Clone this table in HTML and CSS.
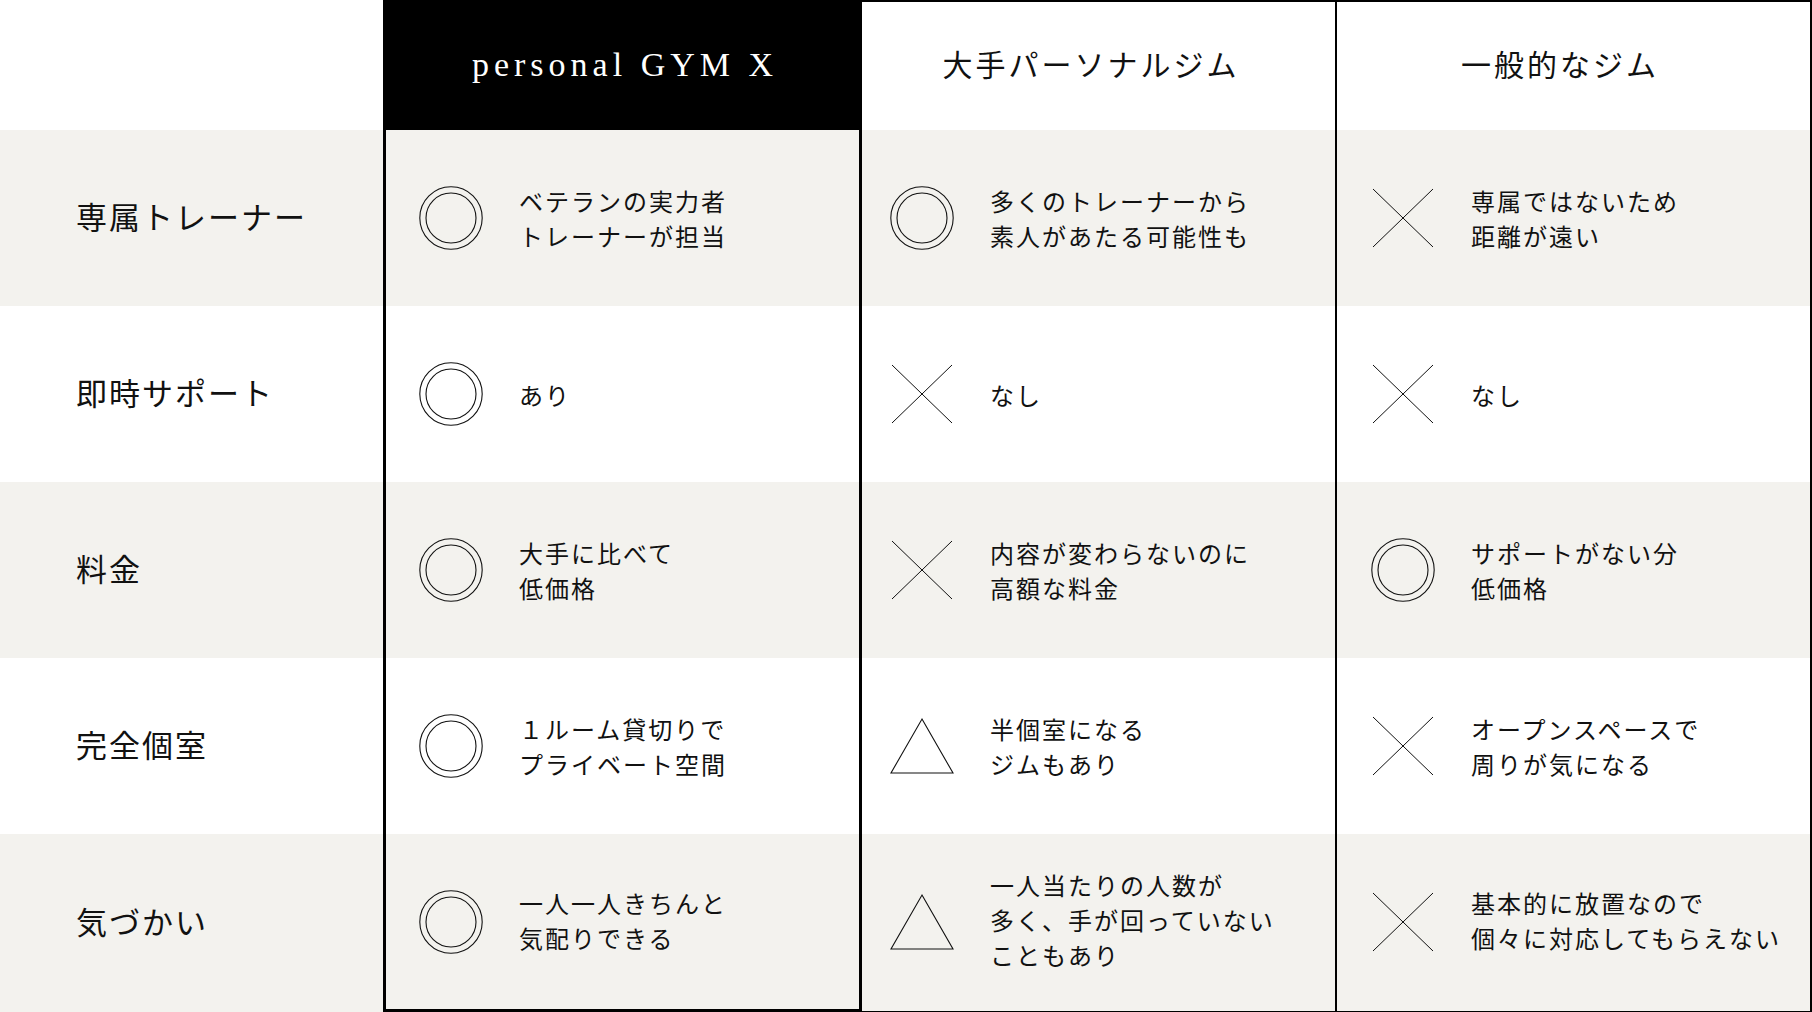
FILE: index.html
```html
<!DOCTYPE html>
<html lang="ja">
<head>
<meta charset="utf-8">
<title>比較表</title>
<link rel="stylesheet" href="styles.css">
</head>
<body>
<svg width="0" height="0" class="defs" aria-hidden="true">
  <defs>
    <symbol id="maru" viewBox="0 0 64 64">
      <circle cx="32" cy="32" r="31.2" fill="none" stroke="#111" stroke-width="1.1"/>
      <circle cx="32" cy="32" r="25" fill="none" stroke="#111" stroke-width="1.1"/>
    </symbol>
    <symbol id="batsu" viewBox="0 0 64 64">
      <line x1="2" y1="3" x2="62" y2="61" stroke="#111" stroke-width="1"/>
      <line x1="62" y1="3" x2="2" y2="61" stroke="#111" stroke-width="1"/>
    </symbol>
    <symbol id="sankaku" viewBox="0 0 64 64">
      <polygon points="32,5 63,59 1,59" fill="none" stroke="#111" stroke-width="1.1" stroke-linejoin="miter"/>
    </symbol>
  </defs>
</svg>
<div class="table">
  <div class="row head">
    <div class="label"></div>
    <div class="cell c1"><span class="brand">personal GYM X</span></div>
    <div class="cell c2"><span class="htxt">大手パーソナルジム</span></div>
    <div class="cell c3"><span class="htxt">一般的なジム</span></div>
  </div>

  <div class="row alt">
    <div class="label">専属トレーナー</div>
    <div class="cell c1"><svg class="ic"><use href="#maru"/></svg><p class="txt">ベテランの実力者<br>トレーナーが担当</p></div>
    <div class="cell c2"><svg class="ic"><use href="#maru"/></svg><p class="txt">多くのトレーナーから<br>素人があたる可能性も</p></div>
    <div class="cell c3"><svg class="ic"><use href="#batsu"/></svg><p class="txt">専属ではないため<br>距離が遠い</p></div>
  </div>

  <div class="row">
    <div class="label">即時サポート</div>
    <div class="cell c1"><svg class="ic"><use href="#maru"/></svg><p class="txt">あり</p></div>
    <div class="cell c2"><svg class="ic"><use href="#batsu"/></svg><p class="txt">なし</p></div>
    <div class="cell c3"><svg class="ic"><use href="#batsu"/></svg><p class="txt">なし</p></div>
  </div>

  <div class="row alt">
    <div class="label">料金</div>
    <div class="cell c1"><svg class="ic"><use href="#maru"/></svg><p class="txt">大手に比べて<br>低価格</p></div>
    <div class="cell c2"><svg class="ic"><use href="#batsu"/></svg><p class="txt">内容が変わらないのに<br>高額な料金</p></div>
    <div class="cell c3"><svg class="ic"><use href="#maru"/></svg><p class="txt">サポートがない分<br>低価格</p></div>
  </div>

  <div class="row">
    <div class="label">完全個室</div>
    <div class="cell c1"><svg class="ic"><use href="#maru"/></svg><p class="txt">１ルーム貸切りで<br>プライベート空間</p></div>
    <div class="cell c2"><svg class="ic"><use href="#sankaku"/></svg><p class="txt">半個室になる<br>ジムもあり</p></div>
    <div class="cell c3"><svg class="ic"><use href="#batsu"/></svg><p class="txt">オープンスペースで<br>周りが気になる</p></div>
  </div>

  <div class="row alt last">
    <div class="label">気づかい</div>
    <div class="cell c1"><svg class="ic"><use href="#maru"/></svg><p class="txt">一人一人きちんと<br>気配りできる</p></div>
    <div class="cell c2"><svg class="ic"><use href="#sankaku"/></svg><p class="txt">一人当たりの人数が<br>多く、手が回っていない<br>こともあり</p></div>
    <div class="cell c3"><svg class="ic"><use href="#batsu"/></svg><p class="txt">基本的に放置なので<br>個々に対応してもらえない</p></div>
  </div>
</div>
</body>
</html>
```
FILE: styles.css
```css
html, body {
  margin: 0;
  padding: 0;
  background: #fff;
}
body {
  width: 1812px;
  height: 1012px;
  overflow: hidden;
  color: #111;
  font-family: "Noto Sans CJK JP", "Noto Sans", sans-serif;
}
.defs {
  position: absolute;
  width: 0;
  height: 0;
}
.table {
  display: flex;
  flex-direction: column;
  width: 1812px;
}
.row {
  display: grid;
  grid-template-columns: 383px 479px 475px 475px;
  height: 176px;
}
.row.head {
  height: 130px;
}
.row.last {
  height: 178px;
}
.row.alt {
  background: #f3f2ee;
}
.label {
  display: flex;
  align-items: center;
  padding-left: 76px;
  padding-bottom: 5px;
  font-size: 31px;
  letter-spacing: 2px;
  line-height: 1;
}
.cell {
  box-sizing: border-box;
  display: flex;
  align-items: center;
}
.c1 {
  border-left: 3px solid #000;
  border-right: 3px solid #000;
  padding-left: 33px;
}
.c2 {
  border-right: 2px solid #000;
  padding-left: 28px;
}
.c3 {
  border-right: 2px solid #000;
  padding-left: 34px;
}
.last .c1 {
  border-bottom: 3px solid #000;
}
.last .c2,
.last .c3 {
  border-bottom: 1px solid #000;
  padding-bottom: 2px;
}
.head .cell {
  justify-content: center;
  padding-left: 0;
}
.head .c1 {
  background: #000;
  padding-left: 5px;
}
.head .c2 {
  border-top: 2px solid #000;
  padding-right: 15px;
  padding-bottom: 6px;
}
.head .c3 {
  border-top: 2px solid #000;
  padding-right: 27px;
  padding-bottom: 6px;
}
.brand {
  color: #fff;
  font-family: "Liberation Serif", "Times New Roman", serif;
  font-size: 34px;
  letter-spacing: 5px;
  line-height: 1;
}
.htxt {
  font-size: 30px;
  letter-spacing: 3px;
  line-height: 1;
}
.ic {
  flex: none;
  width: 64px;
  height: 64px;
  margin-right: 36px;
}
.txt {
  margin: 0;
  font-size: 24px;
  letter-spacing: 2px;
  line-height: 35px;
  white-space: nowrap;
}
.last .txt {
  margin-bottom: 4px;
}
```
